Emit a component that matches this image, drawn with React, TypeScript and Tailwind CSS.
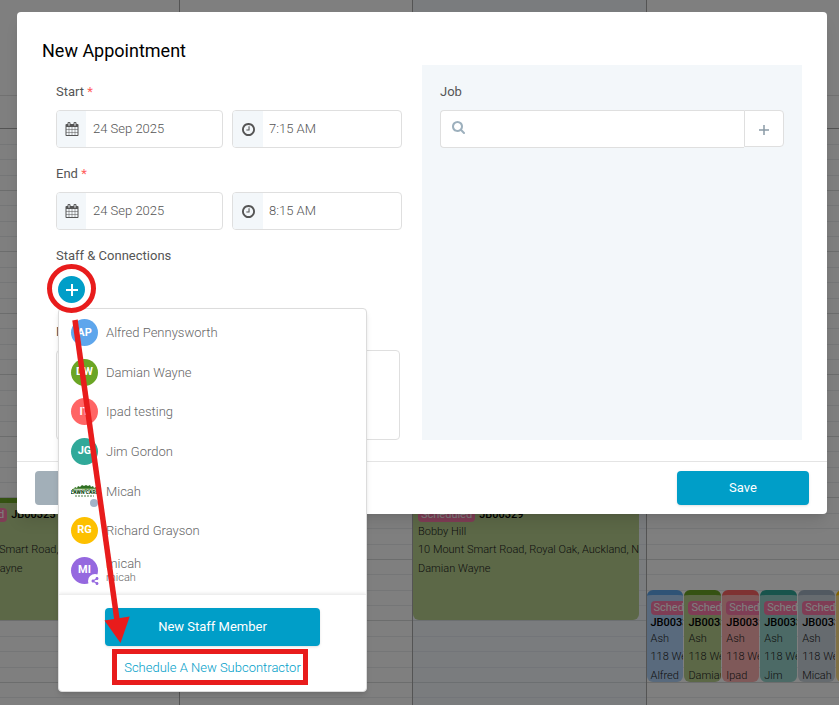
import { useState } from 'react';
import { FaShareAlt } from 'react-icons/fa';
import clsx from 'clsx';

type Staff = { name: string; initials?: string; color?: string; company?: string };

const STAFF: Staff[] = [
  { name: 'Alfred Pennysworth', initials: 'AP', color: 'bg-[#5ea6ec]' },
  { name: 'Damian Wayne', initials: 'DW', color: 'bg-[#6aa524]' },
  { name: 'Ipad testing', initials: 'IT', color: 'bg-[#ff6565]' },
  { name: 'Jim Gordon', initials: 'JG', color: 'bg-[#30a999]' },
  { name: 'Micah' },
  { name: 'Richard Grayson', initials: 'RG', color: 'bg-[#fdc000]' },
  { name: 'micah', initials: 'MI', color: 'bg-[#9568df]', company: 'micah' },
];

const SMALL_EVENTS = [
  { who: 'Alfred', color: 'bg-[#b3d5fa] border-[#5ea6ec]' },
  { who: 'Damian', color: 'bg-[#b8d08f] border-[#6aa524]' },
  { who: 'Ipad', color: 'bg-[#ffb3b3] border-[#ff6565]' },
  { who: 'Jim', color: 'bg-[#98d5cd] border-[#30a999]' },
  { who: 'Micah', color: 'bg-[#ccd6de] border-[#a2b3c2]' },
  { who: 'Richard', color: 'bg-[#fee08a] border-[#fdc000]' },
];

function CalendarIcon() {
  return (
    <svg viewBox="0 0 1792 1792" className="size-[14px] fill-current" aria-hidden="true">
      <path d="M192 1664h288v-288h-288v288zm352 0h320v-288h-320v288zm-352-352h288v-320h-288v320zm352 0h320v-320h-320v320zm-352-384h288v-288h-288v288zm736 736h320v-288h-320v288zm-384-736h320v-288h-320v288zm768 736h288v-288h-288v288zm-384-352h320v-320h-320v320zm-352-864v-288q0-13-9.5-22.5t-22.5-9.5h-64q-13 0-22.5 9.5t-9.5 22.5v288q0 13 9.5 22.5t22.5 9.5h64q13 0 22.5-9.5t9.5-22.5zm736 864h288v-320h-288v320zm-384-384h320v-288h-320v288zm384 0h288v-288h-288v288zm32-480v-288q0-13-9.5-22.5t-22.5-9.5h-64q-13 0-22.5 9.5t-9.5 22.5v288q0 13 9.5 22.5t22.5 9.5h64q13 0 22.5-9.5t9.5-22.5zm384-64v1280q0 52-38 90t-90 38h-1408q-52 0-90-38t-38-90v-1280q0-52 38-90t90-38h128v-96q0-66 47-113t113-47h64q66 0 113 47t47 113v96h384v-96q0-66 47-113t113-47h64q66 0 113 47t47 113v96h128q52 0 90 38t38 90z" />
    </svg>
  );
}

function ClockIcon() {
  return (
    <svg viewBox="0 128 1536 1536" className="size-[13px] fill-current" aria-hidden="true">
      <path d="M896 544v448q0 14-9 23t-23 9h-320q-14 0-23-9t-9-23v-64q0-14 9-23t23-9h224v-352q0-14 9-23t23-9h64q14 0 23 9t9 23zm416 352q0-148-73-273t-198-198-273-73-273 73-198 198-73 273 73 273 198 198 273 73 273-73 198-198 73-273zm224 0q0 209-103 385.5t-279.5 279.5-385.5 103-385.5-103-279.5-279.5-103-385.5 103-385.5 279.5-279.5 385.5-103 385.5 103 279.5 279.5 103 385.5z" />
    </svg>
  );
}

function SearchIcon() {
  return (
    <svg viewBox="0 128 1664 1664" className="size-[13px] fill-current" aria-hidden="true">
      <path d="M1152 832q0-185-131.5-316.5t-316.5-131.5-316.5 131.5-131.5 316.5 131.5 316.5 316.5 131.5 316.5-131.5 131.5-316.5zm512 832q0 52-38 90t-90 38q-54 0-90-38l-343-342q-179 124-399 124-143 0-273.5-55.5t-225-150-150-225-55.5-273.5 55.5-273.5 150-225 225-150 273.5-55.5 273.5 55.5 225 150 150 225 55.5 273.5q0 220-124 399l343 343q37 37 37 90z" />
    </svg>
  );
}

function LawnCareLogo() {
  return (
    <svg viewBox="0 0 27 27" className="size-[27px]" aria-hidden="true">
      <path d="M1 14V11l2 0 1-2 2 1 1-2 2 1 2-2 2 1 2-1 2 1 2-1 1 2 2-1 1 2 2-1 1 2 1 0v3z" fill="#2f6f22" />
      <path d="M2 10.5h23v1H2z" fill="#8bb36f" />
      <text x="13.5" y="16" textAnchor="middle" fontSize="5" fontWeight="900" fontFamily="Roboto, sans-serif" fill="#174d17" stroke="#fff" strokeWidth="1" paintOrder="stroke">
        LAWN CARE
      </text>
      <path d="M4 18h19" stroke="#4d7a44" strokeWidth="1" strokeDasharray="2 1" />
    </svg>
  );
}

function Avatar({ person }: { person: Staff }) {
  return (
    <span
      className={clsx(
        'relative flex size-[27px] shrink-0 items-center justify-center rounded-full text-[11px] font-bold text-white',
        person.color,
      )}
    >
      {person.initials ?? <LawnCareLogo />}
      {!person.initials && (
        <span className="absolute -bottom-0.5 right-0 size-2 rounded-full bg-[#a2b3c8]" />
      )}
      {person.company && (
        <span className="absolute -bottom-1 -right-1 flex size-[14px] items-center justify-center rounded-full bg-white text-[#9568df]">
          <FaShareAlt size={8} />
        </span>
      )}
    </span>
  );
}

function Badge() {
  return (
    <span className="inline-block rounded bg-[#ff7bab] px-[3px] text-[11px] font-normal leading-[14px] text-white">
      Scheduled
    </span>
  );
}

function BigEvent({ job }: { job: string }) {
  return (
    <div className="absolute left-0 right-[7px] top-[498px] h-[122px] overflow-hidden whitespace-nowrap rounded-md border-t-[5px] border-[#6aa524] bg-[#b8d08f] px-[5px] pt-[3px] text-[11px] font-light">
      <div className="flex items-center gap-1 leading-[18px]">
        <Badge />
        <span className="font-medium text-black">{job}</span>
      </div>
      <p className="leading-4">Bobby Hill</p>
      <p className="mt-px leading-[18px]">10 Mount Smart Road, Royal Oak, Auckland, New Zealand</p>
      <p className="mt-px leading-[18px]">Damian Wayne</p>
    </div>
  );
}

function Calendar() {
  return (
    <div className="absolute inset-0 overflow-hidden bg-white" aria-hidden="true">
      <div className="h-24 border-b border-[#e2e2e2]" />
      <div className="h-[33px] border-b border-[#a8a8a8]" />
      {Array.from({ length: 10 }).map((_, i) => (
        <div key={i} className="flex h-[62px] flex-col border-b border-[#d8dada] even:h-[61px]">
          <div className="flex-1 border-b border-[#ebedef]" />
          <div className="flex-1 border-b border-[#ebedef]" />
          <div className="flex-1 border-b border-[#ebedef]" />
          <div className="flex-1" />
        </div>
      ))}
      {/* Day columns sit on top of the hour rows */}
      <div className="absolute inset-y-0 -left-[55px] -right-10 grid grid-cols-4 text-[#1c1c1c]">
        <div className="relative">
          <BigEvent job="JB00325" />
        </div>
        <div className="border-l border-[#a8a8a8]" />
        <div className="relative border-l border-[#a8a8a8] bg-[#d9e8f7]/30">
          <BigEvent job="JB00329" />
        </div>
        <div className="relative border-l border-[#a8a8a8]">
          <div className="absolute left-0 right-[6px] top-[590px] grid grid-cols-6 gap-px">
            {SMALL_EVENTS.map((e) => (
              <div
                key={e.who}
                className={clsx(
                  'h-[92px] overflow-hidden whitespace-nowrap rounded-md border-t-[5px] pl-1 pt-1.5 text-[11px] font-light',
                  e.color,
                )}
              >
                <div className="flex h-[14px]">
                  <Badge />
                </div>
                <p className="font-medium leading-4 text-black">JB00330</p>
                <p className="leading-4">Ash</p>
                <p className="mt-px leading-[18px]">118 Wellington Street</p>
                <p className="mt-px leading-[18px]">{e.who}</p>
              </div>
            ))}
          </div>
        </div>
      </div>
      <div className="absolute inset-0 bg-black/50" />
    </div>
  );
}

function DateTimeRow({ id, label, time }: { id: string; label: string; time: string }) {
  return (
    <div className="mb-4">
      <label htmlFor={id} className="block text-[13px] leading-5 text-[#555]">
        {label} <span className="text-[#ff5c5c]">*</span>
      </label>
      <div className="mt-2 flex gap-[9px]">
        <div className="flex h-[38px] w-[167px] shrink-0 overflow-hidden rounded border border-[#dfdfdf]">
          <span className="flex w-[29px] items-center justify-center bg-[#f3f7fa] text-[#555]">
            <CalendarIcon />
          </span>
          <input id={id} defaultValue="24 Sep 2025" className="min-w-0 flex-1 px-[7px] text-[13px] font-light text-[#555] outline-none" />
        </div>
        <div className="flex h-[38px] min-w-0 flex-1 overflow-hidden rounded border border-[#dfdfdf]">
          <span className="flex w-[30px] shrink-0 items-center justify-center bg-[#f3f7fa] text-[#555]">
            <ClockIcon />
          </span>
          <input
            aria-label={`${label} time`}
            defaultValue={time}
            className="min-w-0 flex-1 px-1.5 text-[13px] font-light text-[#555] outline-none"
          />
        </div>
      </div>
    </div>
  );
}

function StaffMenu() {
  return (
    <div className="absolute left-0.5 top-[42px] w-[309px] overflow-hidden rounded-sm border border-[#dcdcdc] bg-white shadow-md">
      <ul className="flex h-[285px] flex-col pb-1 pt-1">
        {STAFF.map((p) => (
          <li key={p.name} className="flex flex-1">
            <button type="button" className="flex w-full items-center gap-2 px-3 text-left">
              <Avatar person={p} />
              <span className="text-[13px] font-light leading-[15px] text-[#666]">
                {p.name}
                {p.company && <span className="block text-[11px] leading-[13px]">{p.company}</span>}
              </span>
            </button>
          </li>
        ))}
      </ul>
      <div className="flex flex-col items-center border-t border-[#eee] px-[46px] py-[13px] shadow-[0_-1px_3px_rgba(0,0,0,0.08)]">
        <button type="button" className="h-[38px] w-full rounded bg-[#009ec8] text-[13px] text-white shadow-sm">
          New Staff Member
        </button>
        <a href="#subcontractor" className="mt-3 text-[13px] font-light leading-5 text-[#009ec8]">
          Schedule A New Subcontractor
        </a>
      </div>
    </div>
  );
}

// Red callouts pointing from the add button to the subcontractor link
function Callouts() {
  return (
    <svg className="pointer-events-none absolute left-0 top-0 h-[705px] w-[400px]" viewBox="0 0 400 705" fill="none" aria-hidden="true">
      <circle cx="71.5" cy="288.5" r="22" stroke="#e81c1c" strokeWidth="5" />
      <path d="M75 320 117 620" stroke="#e81c1c" strokeWidth="5.5" />
      <path d="M104.5 620.5 129.7 616.5 120.5 643z" fill="#e81c1c" />
      <rect x="114.5" y="651.5" width="191" height="31" stroke="#e81c1c" strokeWidth="5" />
    </svg>
  );
}

export default function App() {
  const [menuOpen, setMenuOpen] = useState(true);

  return (
    <div className="relative min-h-screen overflow-hidden font-['Roboto',sans-serif]">
      <Calendar />

      <main className="relative pb-3 pl-[17px] pr-3 pt-3">
        <form className="rounded bg-white shadow-lg" onSubmit={(e) => e.preventDefault()}>
          <div className="grid grid-cols-[18fr_19fr] gap-x-5 px-[25px] pb-[21px] pt-[27px]">
            <h1 className="col-span-2 h-[26px] text-lg leading-6 text-black">New Appointment</h1>

            <div className="min-w-0 pl-[14px] pt-[17px]">
              <DateTimeRow id="start" label="Start" time="7:15 AM" />
              <DateTimeRow id="end" label="End" time="8:15 AM" />

              <p className="text-[13px] leading-5 text-[#555]">Staff &amp; Connections</p>
              <div className="relative h-14 pt-[10px]">
                <button
                  type="button"
                  aria-label="Add staff"
                  aria-expanded={menuOpen}
                  onClick={() => setMenuOpen(!menuOpen)}
                  className="ml-0.5 flex size-[27px] items-center justify-center rounded-full bg-[#009ec8] text-white"
                >
                  <svg viewBox="0 0 12 12" className="size-3" stroke="currentColor" strokeWidth="2">
                    <path d="M6 0v12M0 6h12" />
                  </svg>
                </button>
                {menuOpen && <StaffMenu />}
              </div>

              <label htmlFor="notes" className="block text-[13px] leading-5 text-[#555]">Notes</label>
              <div className="pr-0.5">
                <textarea id="notes" className="mt-2 block h-[90px] w-full resize-none rounded border border-[#dfdfdf] outline-none" />
              </div>
            </div>

            <div className="min-w-0 bg-[#f3f7fa] px-[18px] pt-[17px]">
              <label htmlFor="job" className="block text-[13px] leading-5 text-[#555]">Job</label>
              <div className="mt-2 flex items-start">
                <div className="flex h-[38px] flex-1 items-center gap-2 rounded-l border border-r-0 border-[#dfdfdf] bg-white pb-1 pl-[11px] text-[#9db0bd]">
                  <SearchIcon />
                  <input id="job" className="min-w-0 flex-1 text-[13px] text-[#555] outline-none" />
                </div>
                <button
                  type="button"
                  aria-label="Add job"
                  className="flex h-[37px] w-10 items-center justify-center rounded-r border border-[#dfdfdf] bg-white pt-0.5 text-[#8b9ba6]"
                >
                  <svg viewBox="0 0 10 10" className="size-[10px]" stroke="currentColor" strokeWidth="1.5">
                    <path d="M5 0v10M0 5h10" />
                  </svg>
                </button>
              </div>
            </div>
          </div>

          <footer className="flex justify-between border-t border-[#e4e4e4] px-[18px] py-[9px]">
            <button type="button" className="h-[34px] w-[132px] rounded bg-[#a2afb8] text-[13px] text-white">Cancel</button>
            <button type="submit" className="h-[34px] w-[132px] rounded bg-[#009ec8] text-[13px] text-white shadow-sm">Save</button>
          </footer>
        </form>
      </main>

      <Callouts />
    </div>
  );
}
